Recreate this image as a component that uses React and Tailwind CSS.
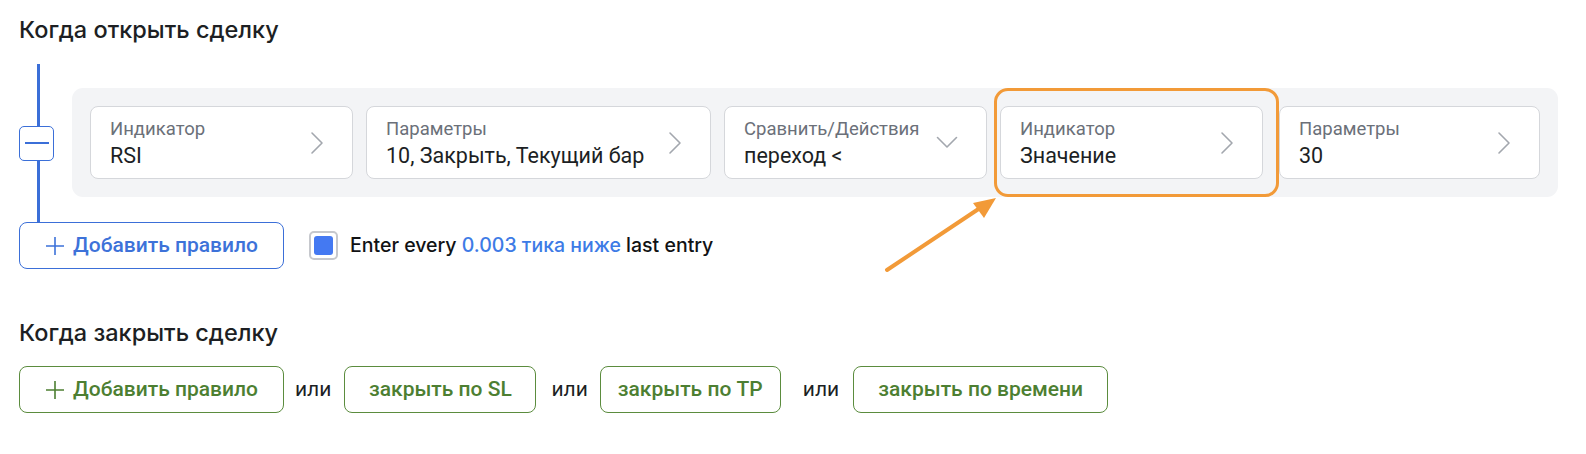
import React from "react";

const Chevron = () => (
  <svg width="14" height="24" viewBox="0 0 14 24" fill="none" className="shrink-0">
    <polyline points="2,2 12,12 2,22" stroke="#a3a7ae" strokeWidth="1.6" strokeLinecap="round" strokeLinejoin="round" />
  </svg>
);

const ChevronDown = () => (
  <svg width="22" height="13" viewBox="0 0 22 13" fill="none" className="shrink-0">
    <polyline points="1.5,1.5 11,11 20.5,1.5" stroke="#a3a7ae" strokeWidth="1.6" strokeLinecap="round" strokeLinejoin="round" />
  </svg>
);

const Plus = ({ color }) => (
  <svg width="20" height="20" viewBox="0 0 20 20" fill="none" className="shrink-0">
    <path d="M10 1v18M1 10h18" stroke={color} strokeWidth="1.6" />
  </svg>
);

const Card = ({ label, value, width, down }) => (
  <div className={`${width} h-[73px] shrink-0 bg-white border border-[#d5d7db] rounded-[8px] pl-[19px] pr-[28px] flex items-center justify-between`}>
    <div className="flex flex-col pt-[1px]">
      <span className="text-[18.5px] leading-[22px] text-[#6b7079]">{label}</span>
      <span className="mt-[3px] text-[21.5px] leading-[25px] text-[#1c1f24] whitespace-nowrap">{value}</span>
    </div>
    {down ? <ChevronDown /> : <Chevron />}
  </div>
);

const GreenButton = ({ children, plus, className = "" }) => (
  <button className={`${className} h-[47px] border border-[#5b8c3e] rounded-[8px] flex items-center justify-center gap-[8px] text-[21px] font-medium text-[#4d7f32] whitespace-nowrap shrink-0`}>
    {plus && <Plus color="#4d7f32" />}
    {children}
  </button>
);

const Or = ({ className = "" }) => (
  <span className={`${className} text-[21px] text-[#1c1f24]`}>или</span>
);

export default function App() {
  return (
    <div className="relative w-[1586px] h-[454px] bg-white font-['Roboto',sans-serif] overflow-hidden">
      <div className="pl-[19px] pr-[28px] pt-[16px]">
        <h2 className="font-['Inter',sans-serif] text-[23.5px] leading-[28px] font-medium text-[#1d1f23]">
          Когда открыть сделку
        </h2>

        <div className="mt-[20px] flex">
          <div className="w-[35px] flex flex-col items-center">
            <div className="w-[3px] flex-1 bg-[#3b6fd8] ml-[3px]" />
            <div className="w-[35px] h-[35px] border border-[#3b6fd8] rounded-[5px] bg-white flex items-center justify-center">
              <div className="w-[24px] h-[2.5px] bg-[#3b6fd8]" />
            </div>
            <div className="w-[3px] flex-1 bg-[#3b6fd8] ml-[3px]" />
          </div>

          <div className="ml-[18px] flex-1 pt-[24px] pb-[25px]">
            <div className="relative h-[109px] bg-[#f3f4f6] rounded-[11px] pl-[18px] flex items-center gap-[13px]">
              <Card label="Индикатор" value="RSI" width="w-[263px]" />
              <Card label="Параметры" value="10, Закрыть, Текущий бар" width="w-[345px]" />
              <Card label="Сравнить/Действия" value="переход <" width="w-[263px]" down />
              <Card label="Индикатор" value="Значение" width="w-[263px]" />
              <div className="ml-[3px]">
                <Card label="Параметры" value="30" width="w-[261px]" />
              </div>
              <div className="absolute left-[922px] top-0 w-[285px] h-[109px] border-[3px] border-[#f29a38] rounded-[14px] pointer-events-none" />
            </div>
          </div>
        </div>

        <div className="flex items-center">
          <button className="w-[265px] h-[47px] border border-[#3b6fd8] rounded-[8px] flex items-center justify-center gap-[8px] text-[21px] font-medium text-[#3d72d9]">
            <Plus color="#3d72d9" />
            Добавить правило
          </button>
          <div className="ml-[25px] w-[29px] h-[29px] border-[2.5px] border-[#c6c8cd] rounded-[5px] flex items-center justify-center">
            <div className="w-[19px] h-[19px] bg-[#4479f2] rounded-[3px]" />
          </div>
          <p className="ml-[12px] font-['Inter',sans-serif] text-[19.5px] font-medium text-[#111214]">
            Enter every <span className="text-[#3d7be6]">0.003 тика ниже</span> last entry
          </p>
        </div>

        <h2 className="mt-[50px] font-['Inter',sans-serif] text-[23.5px] leading-[28px] font-medium text-[#1d1f23]">
          Когда закрыть сделку
        </h2>

        <div className="mt-[19px] flex items-center">
          <GreenButton plus className="w-[265px]">Добавить правило</GreenButton>
          <Or className="ml-[11px]" />
          <GreenButton className="ml-[13px] w-[192px]">закрыть по SL</GreenButton>
          <Or className="ml-[15px]" />
          <GreenButton className="ml-[12px] w-[181px]">закрыть по TP</GreenButton>
          <Or className="ml-[22px]" />
          <GreenButton className="ml-[14px] w-[255px]">закрыть по времени</GreenButton>
        </div>
      </div>

      <svg className="absolute left-0 top-0 pointer-events-none" width="1586" height="454">
        <line x1="887" y1="270" x2="980" y2="208" stroke="#f29a38" strokeWidth="4" strokeLinecap="round" />
        <polygon points="996,198 973,203 984,218" fill="#f29a38" />
      </svg>
    </div>
  );
}
